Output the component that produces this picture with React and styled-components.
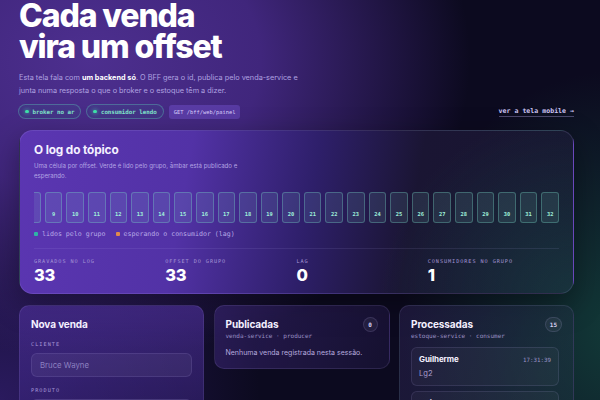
import styled, { createGlobalStyle } from "styled-components";

const mono = `"DejaVu Sans Mono", "Liberation Mono", monospace`;

const GlobalStyle = createGlobalStyle`
  * { box-sizing: border-box; }
  body {
    margin: 0;
    font-family: Inter, "Noto Sans", sans-serif;
    color: #f1edff;
    background-color: #0c0a1f;
    background-image:
      radial-gradient(ellipse 380px 300px at 90px 60px, #4d2f8f 0%, #40267c 45%, rgba(45, 26, 95, 0) 100%),
      radial-gradient(ellipse 260px 260px at 0px 400px, #2a1a5e 0%, rgba(30, 18, 70, 0) 100%),
      radial-gradient(ellipse 220px 260px at 620px 330px, #123a38 0%, rgba(14, 40, 40, 0) 100%);
    overflow: hidden;
  }
`;

const Page = styled.div`
  width: 600px;
  height: 400px;
  padding: 0 26px 0 19px;
  overflow: hidden;
`;

const Title = styled.h1`
  margin: 0;
  font-size: 32px;
  line-height: 31px;
  font-weight: 800;
  letter-spacing: -0.035em;
  color: #ffffff;
`;

const Lead = styled.p`
  margin: 9px 0 0;
  font-size: 7.3px;
  line-height: 13px;
  color: #b0a2e0;
  max-width: 283px;

  strong {
    color: #ffffff;
    font-weight: 700;
  }
`;

const PillRow = styled.div`
  display: flex;
  align-items: center;
  gap: 5px;
  margin-top: 7px;
  margin-left: -1px;
`;

const Pill = styled.span`
  display: inline-flex;
  align-items: center;
  gap: 4px;
  height: 15px;
  padding: 0 6px;
  border-radius: 999px;
  border: 1px solid rgba(96, 210, 190, 0.35);
  background: rgba(40, 160, 150, 0.08);
  font-family: ${mono};
  font-size: 5.8px;
  font-weight: 700;
  color: #7fe3c9;

  &::before {
    content: "";
    width: 3.5px;
    height: 3.5px;
    border-radius: 50%;
    background: #3ee0a8;
    box-shadow: 0 0 4px #3ee0a8;
  }
`;

const Endpoint = styled.span`
  display: inline-flex;
  align-items: center;
  height: 14px;
  padding: 0 5px;
  border-radius: 3px;
  background: rgba(130, 95, 230, 0.35);
  font-family: ${mono};
  font-size: 5.4px;
  color: #d8cdfb;
`;

const MobileLink = styled.a`
  margin-left: auto;
  font-family: ${mono};
  font-size: 6.6px;
  font-weight: 700;
  color: #cdc4f4;
  text-decoration: none;
  padding-bottom: 1px;
  border-bottom: 1px solid rgba(190, 175, 240, 0.35);
  margin-top: 1px;
`;

const Panel = styled.section`
  margin-top: 11px;
  padding: 12px 14px 9px;
  border-radius: 14px;
  border: 1px solid rgba(200, 185, 255, 0.14);
  background:
    radial-gradient(ellipse 200px 190px at 560px 170px, rgba(24, 78, 72, 0.55) 0%, rgba(24, 78, 72, 0) 100%),
    linear-gradient(100deg, #5b36b2 0%, #5232a6 30%, #2e1f6a 52%, #1a1533 70%, #171630 100%);
  box-shadow: 0 10px 30px rgba(0, 0, 0, 0.35);
`;

const PanelTitle = styled.h2`
  margin: 0;
  font-size: 11.8px;
  line-height: 14px;
  font-weight: 700;
  letter-spacing: -0.01em;
  color: #f4f0ff;
`;

const PanelText = styled.p`
  margin: 4px 0 0;
  font-size: 6.1px;
  line-height: 10px;
  color: #b3a5e4;
  max-width: 210px;
`;

const Track = styled.div`
  display: flex;
  justify-content: flex-end;
  gap: 4px;
  margin-top: 11px;
  overflow: hidden;
`;

const Cell = styled.div`
  flex: 0 0 17.6px;
  height: 30.5px;
  border-radius: 3px;
  border: 1px solid ${(p) => (p.$lag ? "rgba(230, 150, 80, 0.5)" : "rgba(120, 220, 200, 0.32)")};
  background: ${(p) => (p.$lag ? "rgba(230, 150, 80, 0.12)" : "rgba(150, 230, 220, 0.11)")};
  display: flex;
  align-items: flex-end;
  justify-content: center;
  padding-bottom: 5px;
  font-family: ${mono};
  font-size: 5.4px;
  font-weight: 700;
  color: #9ff0da;
`;

const Legend = styled.div`
  display: flex;
  gap: 10px;
  margin-top: 7px;
  font-family: ${mono};
  font-size: 6.6px;
  color: #b6a8e6;
`;

const LegendItem = styled.span`
  display: inline-flex;
  align-items: center;
  gap: 4px;

  &::before {
    content: "";
    width: 4px;
    height: 4px;
    border-radius: 1px;
    background: ${(p) => p.$color};
  }
`;

const Stats = styled.div`
  display: grid;
  grid-template-columns: repeat(4, 1fr);
  margin-top: 10px;
  padding-top: 9px;
  border-top: 1px solid rgba(200, 185, 255, 0.1);
`;

const Stat = styled.div`
  display: flex;
  flex-direction: column;
  gap: 2px;
`;

const StatLabel = styled.span`
  font-family: ${mono};
  font-size: 5.2px;
  letter-spacing: 0.18em;
  color: #a596d6;
`;

const StatValue = styled.span`
  font-size: 16.5px;
  line-height: 18px;
  font-weight: 800;
  letter-spacing: -0.02em;
  color: #ffffff;
`;

const Columns = styled.div`
  display: grid;
  grid-template-columns: 185px 176px 1fr;
  gap: 9.5px;
  align-items: start;
  margin-top: 11px;
`;

const Card = styled.section`
  padding: 11px 11px;
  border-radius: 10px;
  border: 1px solid rgba(200, 185, 255, 0.12);
  background: ${(p) => p.$bg};
`;

const CardHead = styled.div`
  display: flex;
  align-items: center;
  justify-content: space-between;
`;

const CardTitle = styled.h3`
  margin: 0;
  font-size: 10px;
  line-height: 14px;
  font-weight: 700;
  letter-spacing: -0.01em;
  color: #f4f0ff;
`;

const Badge = styled.span`
  min-width: 15px;
  height: 15px;
  padding: 0 4px;
  border-radius: 999px;
  border: 1px solid rgba(200, 185, 255, 0.14);
  background: rgba(255, 255, 255, 0.05);
  display: inline-flex;
  align-items: center;
  justify-content: center;
  font-family: ${mono};
  font-size: 6px;
  font-weight: 700;
  color: #d6cff0;
`;

const Service = styled.div`
  margin-top: 0;
  font-family: ${mono};
  font-size: 6px;
  color: #9a8fc4;
`;

const Empty = styled.p`
  margin: 9px 0 0;
  font-size: 7px;
  color: #b6aadf;
`;

const FieldLabel = styled.div`
  margin-top: ${(p) => p.$gap}px;
  font-family: ${mono};
  font-size: 5.2px;
  letter-spacing: 0.2em;
  color: #a898d8;
`;

const Input = styled.input`
  display: block;
  width: 100%;
  height: 24px;
  margin-top: 6px;
  padding: 0 8px;
  border-radius: 6px;
  border: 1px solid rgba(200, 185, 255, 0.12);
  background: rgba(255, 255, 255, 0.05);
  font-family: Inter, sans-serif;
  font-size: 7.8px;
  color: #f1edff;
  outline: none;

  &::placeholder {
    color: #8c80c0;
  }
`;

const List = styled.div`
  margin-top: 8px;
  margin-right: -1px;
  height: 80px;
  overflow-y: scroll;
  display: flex;
  flex-direction: column;
  gap: 5px;

  &::-webkit-scrollbar {
    width: 4px;
  }
  &::-webkit-scrollbar-track {
    background: transparent;
  }
  &::-webkit-scrollbar-thumb {
    background: rgba(200, 190, 240, 0.22);
    border-radius: 4px;
  }
`;

const Item = styled.div`
  flex: 0 0 auto;
  margin-right: 4px;
  padding: 6px 7px 7px;
  border-radius: 6px;
  border: 1px solid rgba(200, 185, 255, 0.12);
  background: rgba(255, 255, 255, 0.03);
`;

const ItemHead = styled.div`
  display: flex;
  justify-content: space-between;
  align-items: baseline;
`;

const ItemName = styled.span`
  font-size: 8px;
  font-weight: 700;
  letter-spacing: -0.01em;
  color: #f4f0ff;
`;

const ItemTime = styled.span`
  font-family: ${mono};
  font-size: 5.8px;
  color: #9e94c8;
`;

const ItemProduct = styled.div`
  margin-top: 5px;
  font-size: 7.6px;
  color: #a89ccd;
`;

const offsets = Array.from({ length: 33 }, (_, i) => i);

const processed = [
  { name: "Guilherme", time: "17:31:39", product: "Lg2" },
  { name: "Guilherme", time: "17:31:39", product: "Lg2" },
  { name: "Guilherme", time: "17:31:38", product: "Lg2" },
];

export default function App() {
  return (
    <>
      <GlobalStyle />
      <Page>
        <Title>
          Cada venda
          <br />
          vira um offset
        </Title>
        <Lead>
          Esta tela fala com <strong>um backend só</strong>. O BFF gera o id, publica pelo
          venda-service e junta numa resposta o que o broker e o estoque têm a dizer.
        </Lead>
        <PillRow>
          <Pill>broker no ar</Pill>
          <Pill>consumidor lendo</Pill>
          <Endpoint>GET /bff/web/painel</Endpoint>
          <MobileLink href="#">ver a tela mobile →</MobileLink>
        </PillRow>

        <Panel>
          <PanelTitle>O log do tópico</PanelTitle>
          <PanelText>
            Uma célula por offset. Verde é lido pelo grupo, âmbar está publicado e esperando.
          </PanelText>
          <Track>
            {offsets.map((n) => (
              <Cell key={n}>{n}</Cell>
            ))}
          </Track>
          <Legend>
            <LegendItem $color="#2fb3a6">lidos pelo grupo</LegendItem>
            <LegendItem $color="#e08a4c">esperando o consumidor (lag)</LegendItem>
          </Legend>
          <Stats>
            <Stat>
              <StatLabel>GRAVADOS NO LOG</StatLabel>
              <StatValue>33</StatValue>
            </Stat>
            <Stat>
              <StatLabel>OFFSET DO GRUPO</StatLabel>
              <StatValue>33</StatValue>
            </Stat>
            <Stat>
              <StatLabel>LAG</StatLabel>
              <StatValue>0</StatValue>
            </Stat>
            <Stat>
              <StatLabel>CONSUMIDORES NO GRUPO</StatLabel>
              <StatValue>1</StatValue>
            </Stat>
          </Stats>
        </Panel>

        <Columns>
          <Card $bg="linear-gradient(180deg, rgba(80, 50, 160, 0.6) 0%, rgba(55, 35, 120, 0.5) 100%)">
            <CardTitle>Nova venda</CardTitle>
            <FieldLabel $gap={10}>CLIENTE</FieldLabel>
            <Input placeholder="Bruce Wayne" />
            <FieldLabel $gap={10}>PRODUTO</FieldLabel>
            <Input placeholder="" />
          </Card>

          <Card $bg="linear-gradient(110deg, rgba(70, 45, 140, 0.45) 0%, rgba(40, 30, 80, 0.35) 100%)">
            <CardHead>
              <CardTitle>Publicadas</CardTitle>
              <Badge>0</Badge>
            </CardHead>
            <Service>venda-service · producer</Service>
            <Empty>Nenhuma venda registrada nesta sessão.</Empty>
          </Card>

          <Card $bg="linear-gradient(110deg, rgba(45, 35, 85, 0.5) 0%, rgba(30, 55, 65, 0.45) 100%)">
            <CardHead>
              <CardTitle>Processadas</CardTitle>
              <Badge>15</Badge>
            </CardHead>
            <Service>estoque-service · consumer</Service>
            <List>
              {processed.map((p, i) => (
                <Item key={i}>
                  <ItemHead>
                    <ItemName>{p.name}</ItemName>
                    <ItemTime>{p.time}</ItemTime>
                  </ItemHead>
                  <ItemProduct>{p.product}</ItemProduct>
                </Item>
              ))}
            </List>
          </Card>
        </Columns>
      </Page>
    </>
  );
}
